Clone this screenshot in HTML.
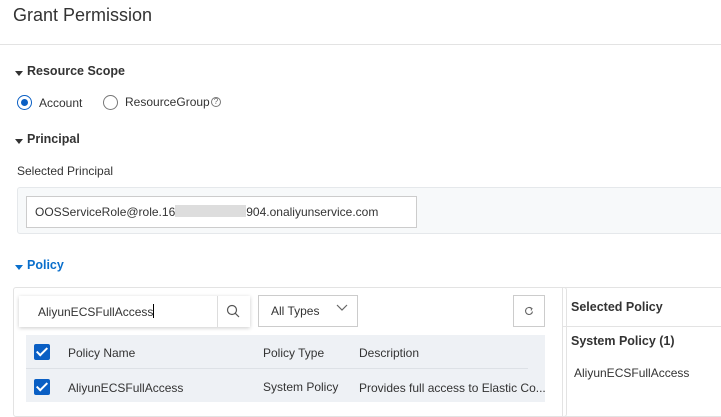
<!DOCTYPE html>
<html><head><style>
*{box-sizing:border-box;margin:0;padding:0}
body{width:721px;height:407px;overflow:hidden;background:#fff;font-family:"Liberation Sans",sans-serif;color:#333;font-size:12px;position:relative}
.a{position:absolute;white-space:nowrap}
.tri{position:absolute;width:0;height:0;border-left:4px solid transparent;border-right:4px solid transparent;border-top:5px solid #333}
.b{font-weight:bold;font-size:12.5px}
.cb{position:absolute;width:16px;height:16px;background:#0a5fc4;border-radius:2px}
.cb:after{content:"";position:absolute;left:5px;top:1px;width:4px;height:9px;border:solid #fff;border-width:0 2px 2px 0;transform:rotate(45deg)}
</style></head><body>
<div class="a" style="left:13px;top:5px;font-size:18px;color:#333">Grant Permission</div>
<div class="a" style="left:0;top:44px;width:721px;height:1px;background:#e3e3e3"></div>

<div class="tri" style="left:15px;top:71px"></div>
<div class="a b" style="left:27px;top:64px">Resource Scope</div>
<div class="a" style="left:17px;top:95px;width:15px;height:15px;border:1px solid #0a5fc4;border-radius:50%"></div>
<div class="a" style="left:21px;top:99px;width:7px;height:7px;background:#0a5fc4;border-radius:50%"></div>
<div class="a" style="left:39px;top:96px">Account</div>
<div class="a" style="left:103px;top:95px;width:15px;height:15px;border:1px solid #777;border-radius:50%"></div>
<div class="a" style="left:125px;top:95px">ResourceGroup</div>
<div class="a" style="left:211px;top:97px;width:10px;height:10px;border:1px solid #777;border-radius:50%;font-size:8px;line-height:8px;text-align:center;color:#666">?</div>

<div class="tri" style="left:15px;top:139px"></div>
<div class="a b" style="left:27px;top:132px">Principal</div>
<div class="a" style="left:17px;top:164px">Selected Principal</div>
<div class="a" style="left:17px;top:187px;width:720px;height:47px;background:#f7f9fa;border:1px solid #e5e8eb;border-radius:3px"></div>
<div class="a" style="left:26px;top:196px;width:391px;height:32px;background:#fff;border:1px solid #ccc"></div>
<div class="a" style="left:35px;top:205px">OOSServiceRole@role.16<span style="display:inline-block;width:71px;height:12px;background:#ddd;vertical-align:-1px"></span>904.onaliyunservice.com</div>

<div class="tri" style="left:15px;top:265px;border-top-color:#0a6fcc"></div>
<div class="a b" style="left:27px;top:258px;color:#0a6fcc">Policy</div>

<div class="a" style="left:13px;top:287px;width:554px;height:130px;border:1px solid #e3e3e3;border-radius:3px"></div>
<div class="a" style="left:19px;top:296px;width:231px;height:31px;background:#fff;box-shadow:0 1px 4px rgba(0,0,0,.2)"></div>
<div class="a" style="left:217px;top:296px;width:1px;height:31px;background:#ddd"></div>
<div class="a" style="left:38px;top:304px">AliyunECSFullAccess<span style="display:inline-block;width:1px;height:14px;background:#000;vertical-align:-2px"></span></div>
<svg class="a" style="left:226px;top:304px" width="14" height="14"><circle cx="6" cy="6" r="4.5" fill="none" stroke="#555" stroke-width="1.2"/><path d="M9.3 9.3L13 13" stroke="#555" stroke-width="1.2"/></svg>
<div class="a" style="left:258px;top:295px;width:100px;height:32px;border:1px solid #ccc"></div>
<div class="a" style="left:271px;top:304px">All Types</div>
<svg class="a" style="left:336px;top:303px" width="12" height="10"><path d="M1 2L6 7L11 2" fill="none" stroke="#666" stroke-width="1.2"/></svg>
<div class="a" style="left:513px;top:295px;width:32px;height:32px;border:1px solid #ccc"></div>
<svg class="a" style="left:524px;top:306px" width="10" height="10"><path d="M7.5 2.5A3.5 3.5 0 1 0 8.5 5.5" fill="none" stroke="#666" stroke-width="1.1"/><path d="M6 1.5L8 2.5L7 4.5" fill="none" stroke="#666" stroke-width="1"/></svg>

<div class="a" style="left:26px;top:335px;width:519px;height:67px;background:#eef1f5"></div>
<div class="a" style="left:26px;top:368px;width:502px;height:1px;background:#dde1e6"></div>
<div class="cb" style="left:34px;top:344px"></div>
<div class="a" style="left:68px;top:346px">Policy Name</div>
<div class="a" style="left:263px;top:346px">Policy Type</div>
<div class="a" style="left:359px;top:346px">Description</div>
<div class="cb" style="left:34px;top:379px"></div>
<div class="a" style="left:68px;top:381px">AliyunECSFullAccess</div>
<div class="a" style="left:263px;top:380px">System Policy</div>
<div class="a" style="left:359px;top:381px">Provides full access to Elastic Co...</div>

<div class="a" style="left:562px;top:287px;width:170px;height:130px;border:1px solid #e3e3e3"></div>
<div class="a" style="left:562px;top:326px;width:170px;height:1px;background:#e3e3e3"></div>
<div class="a b" style="left:571px;top:300px">Selected Policy</div>
<div class="a b" style="left:571px;top:334px">System Policy (1)</div>
<div class="a" style="left:574px;top:366px">AliyunECSFullAccess</div>
</body></html>
